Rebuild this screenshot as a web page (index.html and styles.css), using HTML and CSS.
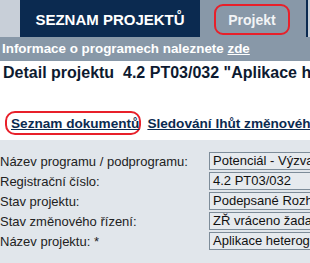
FILE: index.html
```html
<!DOCTYPE html>
<html lang="cs">
<head>
    <meta charset="UTF-8">
    <title>Detail projektu</title>
    <link rel="stylesheet" href="styles.css">
</head>
<body>
    <div class="tabs">
        <div class="tab-gap"></div>
        <div class="tab tab-active">SEZNAM PROJEKTŮ</div>
        <div class="tab tab-current"><span class="mark mark-tab">Projekt</span></div>
        <div class="tab-edge"></div>
        <div class="tab-gap tab-rest"></div>
    </div>

    <div class="info">Informace o programech naleznete <a href="#">zde</a></div>

    <h1 class="title">Detail projektu&nbsp; 4.2 PT03/032 "Aplikace heterogenních</h1>

    <div class="links">
        <span class="mark mark-link"><a href="#">Seznam dokumentů</a></span>
        <a href="#">Sledování lhůt změnového řízení</a>
    </div>

    <div class="form">
        <div class="row"><label>Název programu / podprogramu:</label><div class="field">Potenciál - Výzva 1</div></div>
        <div class="row"><label>Registrační číslo:</label><div class="field">4.2 PT03/032</div></div>
        <div class="row"><label>Stav projektu:</label><div class="field">Podepsané Rozhodnutí</div></div>
        <div class="row"><label>Stav změnového řízení:</label><div class="field">ZŘ vráceno žadateli</div></div>
        <div class="row"><label>Název projektu: *</label><div class="field">Aplikace heterogenních</div></div>
    </div>
</body>
</html>
```

FILE: styles.css
```css
/* Reset */
* {
    margin: 0;
    padding: 0;
    box-sizing: border-box;
}

html, body {
    overflow: hidden;
}

body {
    font-family: 'Liberation Sans', Arial, sans-serif;
    background: #ffffff;
    width: 310px;
    height: 263px;
}

/* Top tabs */
.tabs {
    display: flex;
    height: 37px;
    background: #c8cfd8;
}

.tabs > div {
    flex: none;
}

.tab-gap {
    width: 20px;
}

.tabs > .tab-rest {
    flex: 1;
}

.tab {
    display: flex;
    align-items: center;
    justify-content: center;
    font-weight: bold;
    color: #ffffff;
    white-space: nowrap;
}

.tab-active {
    width: 180px;
    background: #0b2a50;
    font-size: 15px;
    padding-top: 1px;
}

.tab-current {
    width: 106px;
    background: #8898a8;
    font-size: 14px;
    justify-content: flex-start;
}

.tab-edge {
    width: 2px;
    background: #0b2a50;
}

/* Red highlight marks */
.mark {
    border: 2px solid #e8202a;
}

.mark-tab {
    display: flex;
    align-items: center;
    justify-content: center;
    width: 76px;
    height: 31px;
    border-radius: 9px;
    margin-left: 14px;
    margin-top: 2px;
    color: #f2f4f6;
}

/* Info bar */
.info {
    height: 24px;
    background: #8898a8;
    color: #ffffff;
    font-size: 13.4px;
    font-weight: bold;
    line-height: 24px;
    padding-left: 2px;
    white-space: nowrap;
}

.info a {
    color: #ffffff;
}

/* Page title */
.title {
    font-size: 16px;
    font-weight: bold;
    color: #0d1a30;
    padding: 3px 0 0 3px;
    white-space: nowrap;
    height: 22px;
}

/* Links row */
.links {
    display: flex;
    align-items: center;
    height: 57px;
    padding: 28px 0 5px 5px;
    white-space: nowrap;
    font-size: 13.6px;
    font-weight: bold;
}

.links a {
    color: #0b2a50;
}

.mark-link {
    display: flex;
    align-items: center;
    width: 140px;
    height: 24px;
    border-radius: 10px;
    padding-left: 4px;
    margin-right: 6px;
}

/* Form */
.form {
    background: #e1e6eb;
    padding-top: 11px;
    height: 123px;
}

.row {
    display: flex;
    align-items: center;
    height: 20px;
    font-size: 13px;
    color: #222222;
    white-space: nowrap;
}

.row label {
    width: 209px;
    flex: none;
}

.field {
    flex: none;
    width: 110px;
    height: 18px;
    line-height: 16px;
    border: 1px solid #7d8c99;
    background: #e6eaee;
    padding-left: 3px;
    font-size: 13px;
    color: #111111;
    overflow: hidden;
}
```
